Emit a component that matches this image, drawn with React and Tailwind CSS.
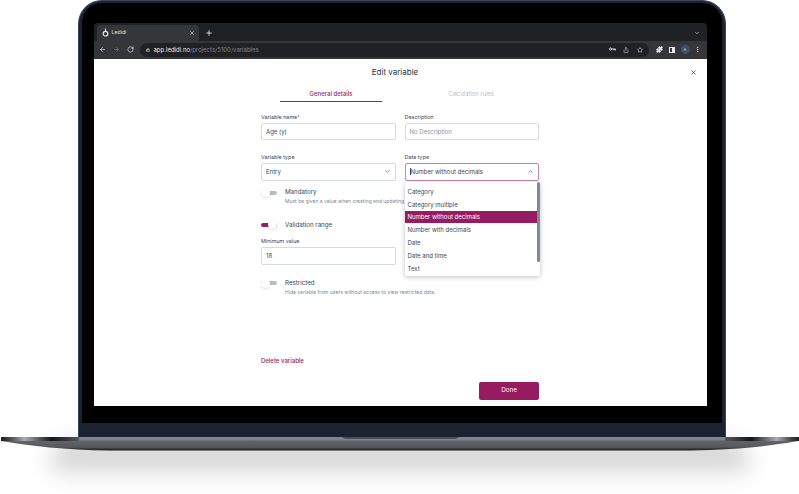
import React from "react";
import { ArrowLeft, ArrowRight, RotateCw, Lock, X, Plus, ChevronDown, ChevronUp, Share, Star, Puzzle, EllipsisVertical } from "lucide-react";

const font = { fontFamily: "Inter, 'Noto Sans', sans-serif" };

const Toggle = ({ on }) => (
  <div className="relative w-[16px] h-[9px] flex items-center justify-end">
    <div className={on ? "w-[16px] h-[4px] rounded-full bg-[#9b1c62]" : "w-[16px] h-[4px] rounded-full bg-[#b4bcc8]"} />
    <div className={on ? "absolute right-0 w-[9px] h-[9px] rounded-full bg-white shadow" : "absolute left-0 w-[9px] h-[9px] rounded-full bg-white shadow"} />
  </div>
);

const Field = ({ label, required, value, muted, icon, active, width = "w-[135px]", h = "h-[17.5px]" }) => (
  <div className={width}>
    <div className="text-[5.4px] leading-[8px] text-[#3a4656] mb-[2px]">
      {label}
      {required && <span className="text-[#e0455f]">*</span>}
    </div>
    <div
      className={
        "flex items-center justify-between rounded-[2px] border-[0.75px] px-[4px] text-[6px] " + h + " " +
        (active ? "border-[#c987ad] text-[#3a4656]" : "border-[#d5dbe2] text-[#3a4656]")
      }
    >
      <span className={muted ? "text-[#8b95a3]" : ""}>
        {active && <span className="border-l-[0.75px] border-[#3a4656]" />}
        {value}
      </span>
      {icon}
    </div>
  </div>
);

const OPTIONS = ["Category", "Category multiple", "Number without decimals", "Number with decimals", "Date", "Date and time", "Text"];

const Dropdown = () => (
  <div className="absolute left-[311px] top-[123px] w-[135px] h-[94px] bg-white rounded-b-[2px] shadow-[0_1px_5px_rgba(0,0,0,0.25)]">
    <div className="absolute right-0 top-0 w-[3px] h-[80px] rounded-full bg-[#7d8a9b]" />
    <div className="pt-[3.5px]">
      {OPTIONS.map((o) => (
        <div
          key={o}
          className={
            o === "Number without decimals"
              ? "h-[12.8px] w-[132px] px-[3px] flex items-center text-[6px] bg-[#961b60] text-white"
              : "h-[12.8px] px-[3px] flex items-center text-[6px] text-[#3a4656]"
          }
        >
          {o}
        </div>
      ))}
    </div>
  </div>
);

const Browser = () => (
  <div className="bg-[#202124] rounded-t-[4px]">
    <div className="h-[18px] flex items-end pl-[3px] pr-[7px]">
      <div className="w-[102px] h-[16px] bg-[#35363a] rounded-t-[4px] flex items-center pl-[5px] pr-[4px] text-[5.2px] text-[#dfe1e5]">
        <svg width="7" height="9" viewBox="0 0 7 9" className="mr-[3px]">
          <circle cx="3.5" cy="5.7" r="2.3" fill="none" stroke="#e8eaed" strokeWidth="1.2" />
          <path d="M3.5 0.5 V3.4" stroke="#e8eaed" strokeWidth="1" />
        </svg>
        <span className="flex-1">Ledidi</span>
        <X size={6} color="#e8eaed" strokeWidth={2.5} />
      </div>
      <Plus size={8} color="#e8eaed" strokeWidth={2.5} className="ml-[6px] mb-[4px]" />
      <ChevronDown size={6} color="#bdc1c6" strokeWidth={3} className="ml-auto mb-[5px]" />
    </div>
    <div className="h-[18px] bg-[#35363a] flex items-center pl-[5px] pr-[6px]">
      <ArrowLeft size={7} color="#e8eaed" strokeWidth={2.2} />
      <ArrowRight size={7} color="#7c7f84" strokeWidth={2.2} className="ml-[7px]" />
      <RotateCw size={7} color="#e8eaed" strokeWidth={2.2} className="ml-[7px]" />
      <div className="ml-[6px] flex-1 h-[14px] rounded-full bg-[#202124] flex items-center pl-[6px] pr-[5px] text-[6px]">
        <Lock size={4} color="#e8eaed" strokeWidth={3} className="mr-[4px]" />
        <span className="text-[#e8eaed]">app.ledidi.no</span>
        <span className="text-[#80858b]">/projects/5100/variables</span>
        <svg width="7" height="5" viewBox="0 0 7 5" className="ml-auto">
          <circle cx="1.6" cy="2" r="1.1" fill="none" stroke="#e8eaed" strokeWidth="0.9" />
          <path d="M2.7 2 H6.6 M5 2 V3.4 M6.3 2 V3.4" stroke="#e8eaed" strokeWidth="0.9" fill="none" />
        </svg>
        <Share size={6} color="#e8eaed" className="ml-[7px]" />
        <Star size={6} color="#e8eaed" className="ml-[8px] mr-[1px]" />
      </div>
      <Puzzle size={7} color="#e8eaed" fill="#e8eaed" className="ml-[7px]" />
      <div className="ml-[6px] w-[6px] h-[6px] border-[1px] border-[#e8eaed] border-r-[3px]" />
      <div className="ml-[6px] w-[9px] h-[9px] rounded-full bg-[#3d5166] flex items-center justify-center text-[4px] text-[#dfe1e5]">A</div>
      <EllipsisVertical size={7} color="#e8eaed" className="ml-[4px]" />
    </div>
  </div>
);

const Form = () => (
  <div className="relative flex-1 bg-white flex flex-col">
    <div className="relative h-[27px] flex items-center justify-center pr-[10px] text-[8px] text-[#2b3441]">
      Edit variable
      <X size={7} color="#2b3441" strokeWidth={2.4} className="absolute right-[10px] top-[10px]" />
    </div>
    <div className="flex justify-center gap-[38px] pl-[2px] h-[16px] text-[6px]">
      <div className="w-[102px] text-center font-medium text-[#9b1c62] border-b-[1px] border-[#9b1c62] leading-[16px]">General details</div>
      <div className="w-[102px] text-center text-[5.8px] text-[#b9c0ca] leading-[16px]">Calculation rules</div>
    </div>
    <div className="w-[278px] ml-[167.5px] mt-[11px] flex flex-col flex-1">
      <div className="flex gap-[9px]">
        <Field label="Variable name" required value="Age (y)" />
        <Field label="Description" value="No Description" muted />
      </div>
      <div className="flex gap-[9px] mt-[13px]">
        <Field label="Variable type" value="Entry" icon={<ChevronDown size={7} color="#3a4656" />} />
        <Field label="Data type" value="Number without decimals" active icon={<ChevronUp size={7} color="#3a4656" />} />
      </div>
      <div className="mt-[6.5px] flex gap-[8px]">
        <div className="mt-[1px]"><Toggle /></div>
        <div>
          <div className="text-[6.2px] leading-[9px] text-[#3a4656]">Mandatory</div>
          <div className="mt-[1px] text-[5px] leading-[8px] text-[#7d8794] whitespace-nowrap">Must be given a value when creating and updating</div>
        </div>
      </div>
      <div className="mt-[15px] flex gap-[8px] items-center">
        <Toggle on />
        <div className="text-[6.2px] leading-[9px] text-[#3a4656]">Validation range</div>
      </div>
      <div className="mt-[7.5px]">
        <Field label="Minimum value" value="18" h="h-[18px]" />
      </div>
      <div className="mt-[13px] flex gap-[8px]">
        <div className="mt-[1px]"><Toggle /></div>
        <div>
          <div className="text-[6.2px] leading-[9px] text-[#3a4656]">Restricted</div>
          <div className="mt-[1px] text-[5px] leading-[8px] text-[#7d8794] whitespace-nowrap">Hide variable from users without access to view restricted data.</div>
        </div>
      </div>
      <div className="mt-[60.5px] text-[6px] font-medium text-[#9b1c62]">Delete variable</div>
      <div className="mt-[17px] self-end w-[60px] h-[18px] rounded-[2px] bg-[#961b60] text-white text-[6.3px] flex items-center justify-center">Done</div>
    </div>
    <Dropdown />
  </div>
);

export default function App() {
  return (
    <div style={font} className="relative w-[799px] h-[494px] bg-white overflow-hidden">
      <div className="absolute left-[50px] top-[446px] w-[700px] h-[34px] rounded-[30px] bg-gradient-to-b from-[#b8b8b8] to-white blur-[11px]" />
      <div className="relative ml-[78px] w-[648px] h-[437px] rounded-t-[24px] bg-[#1b2330] border-[1.5px] border-b-0 border-[#39465a] flex flex-col">
        <div className="mx-[3px] mt-[2px] h-[419.5px] rounded-t-[20px] bg-black pt-[19.5px] pl-[11.5px] pr-[15.5px] pb-[16px] flex flex-col">
          <div className="h-[383px] flex flex-col overflow-hidden">
            <Browser />
            <Form />
          </div>
        </div>
      </div>
      <svg width="799" height="14" viewBox="0 0 799 14" className="relative block">
        <defs>
          <linearGradient id="body" x1="0" y1="0" x2="0" y2="1">
            <stop offset="0" stopColor="#7b8594" />
            <stop offset="0.18" stopColor="#7b8594" />
            <stop offset="0.3" stopColor="#606469" />
            <stop offset="0.75" stopColor="#55585d" />
            <stop offset="1" stopColor="#17181a" />
          </linearGradient>
          <linearGradient id="wing" x1="0" y1="0" x2="1" y2="0">
            <stop offset="0" stopColor="#1b1b1d" />
            <stop offset="0.12" stopColor="#4a4b4e" />
            <stop offset="0.3" stopColor="#a9adb4" />
            <stop offset="0.65" stopColor="#141416" />
            <stop offset="1" stopColor="#55585d" />
          </linearGradient>
        </defs>
        <path d="M1 0 H798 V4 C770 9 735 13 690 13.5 H110 C65 13 30 9 1 4 Z" fill="url(#body)" />
        <rect x="1" y="-1" width="78" height="5" fill="url(#wing)" />
        <rect x="725" y="-1" width="74" height="5" fill="url(#wing)" transform="matrix(-1 0 0 1 1524 0)" />
        <path d="M342 0 H459 L456 2 H345 Z" fill="#4a5059" />
      </svg>
    </div>
  );
}
